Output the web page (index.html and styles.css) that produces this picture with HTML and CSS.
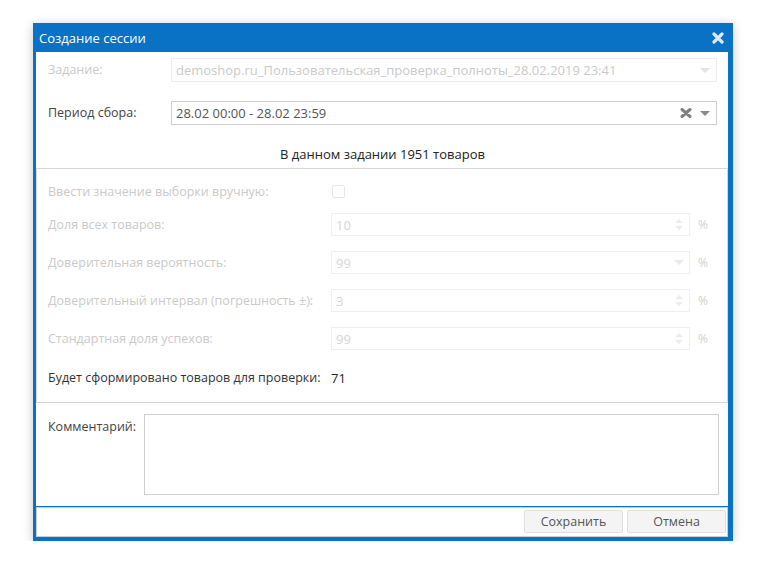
FILE: index.html
```html
<!DOCTYPE html>
<html lang="ru">
<head>
<meta charset="utf-8">
<title>Создание сессии</title>
<link rel="stylesheet" href="styles.css">
</head>
<body>
<div class="page">
  <div class="dialog">
    <div class="titlebar">
      <span class="title">Создание сессии</span>
      <svg class="close" width="12" height="12" viewBox="0 0 12 12"><path d="M2 2 L10 10 M10 2 L2 10" stroke="#dce9f6" stroke-width="3.2" stroke-linecap="round"/></svg>
    </div>
    <div class="content">
      <div class="top">
        <div class="frow">
          <span class="lbl lbl-top dis">Задание:</span>
          <div class="select select-dis">
            <span class="sel-text">demoshop.ru_Пользовательская_проверка_полноты_28.02.2019 23:41</span>
            <svg class="arrow" width="10" height="5" viewBox="0 0 10 5"><path d="M0 0 H10 L5 5 Z" fill="#e2e2e2"/></svg>
          </div>
        </div>
        <div class="frow">
          <span class="lbl lbl-top">Период сбора:</span>
          <div class="select">
            <span class="sel-text">28.02 00:00 - 28.02 23:59</span>
            <svg class="clear" width="12" height="10" viewBox="0 0 12 10"><path d="M2 1.5 L10 8.5 M10 1.5 L2 8.5" stroke="#808080" stroke-width="3" stroke-linecap="round"/></svg>
            <svg class="arrow" width="10" height="5" viewBox="0 0 10 5"><path d="M0 0 H10 L5 5 Z" fill="#8a8a8a"/></svg>
          </div>
        </div>
        <div class="info">В данном задании 1951 товаров</div>
      </div>

      <div class="params">
        <div class="prow prow-check">
          <span class="lbl lbl-mid dis">Ввести значение выборки вручную:</span>
          <span class="checkbox"></span>
        </div>
        <div class="prow">
          <span class="lbl lbl-mid dis">Доля всех товаров:</span>
          <div class="num">
            <span class="num-text">10</span>
            <svg class="spin" width="10" height="11" viewBox="0 0 10 11"><path d="M1 4 L5 0 L9 4 Z M1 7 L5 11 L9 7 Z" fill="#ebebeb"/></svg>
          </div>
          <span class="pct">%</span>
        </div>
        <div class="prow">
          <span class="lbl lbl-mid dis">Доверительная вероятность:</span>
          <div class="num">
            <span class="num-text">99</span>
            <svg class="spin" width="10" height="5" viewBox="0 0 10 5"><path d="M0 0 H10 L5 5 Z" fill="#ebebeb"/></svg>
          </div>
          <span class="pct">%</span>
        </div>
        <div class="prow">
          <span class="lbl lbl-mid dis">Доверительный интервал (погрешность ±):</span>
          <div class="num">
            <span class="num-text">3</span>
            <svg class="spin" width="10" height="11" viewBox="0 0 10 11"><path d="M1 4 L5 0 L9 4 Z M1 7 L5 11 L9 7 Z" fill="#ebebeb"/></svg>
          </div>
          <span class="pct">%</span>
        </div>
        <div class="prow">
          <span class="lbl lbl-mid dis">Стандартная доля успехов:</span>
          <div class="num">
            <span class="num-text">99</span>
            <svg class="spin" width="10" height="11" viewBox="0 0 10 11"><path d="M1 4 L5 0 L9 4 Z M1 7 L5 11 L9 7 Z" fill="#ebebeb"/></svg>
          </div>
          <span class="pct">%</span>
        </div>
        <div class="result">
          <span class="lbl lbl-mid">Будет сформировано товаров для проверки:</span>
          <span class="value">71</span>
        </div>
      </div>

      <div class="comment">
        <span class="lbl lbl-com">Комментарий:</span>
        <div class="textarea"></div>
      </div>
    </div>
    <div class="buttons">
      <button class="btn">Сохранить</button>
      <button class="btn">Отмена</button>
    </div>
  </div>
</div>
</body>
</html>
```
FILE: styles.css
```css
html, body {
  margin: 0;
  padding: 0;
  background: #ffffff;
}

body {
  font-family: "Open Sans", "Liberation Sans", sans-serif;
  font-size: 12.5px;
  color: #444444;
}

.page {
  padding: 23px 0 0 33px;
}

.dialog {
  width: 700px;
  height: 518px;
  box-sizing: border-box;
  background: #0a72c4;
  padding: 0 5px 4px 3px;
  display: flex;
  flex-direction: column;
  box-shadow: 0 2px 10px rgba(0, 0, 0, 0.22);
}

.titlebar {
  height: 29px;
  display: flex;
  align-items: center;
  justify-content: space-between;
  padding: 0 4px 0 3px;
  flex-shrink: 0;
}

.title {
  color: #ffffff;
  font-size: 13px;
  line-height: 18px;
  padding-top: 1px;
}

.close {
  display: block;
  margin-top: 1px;
}

.content {
  background: #ffffff;
  display: flex;
  flex-direction: column;
  height: 454px;
  flex-shrink: 0;
}

.top {
  height: 116px;
  box-sizing: border-box;
  padding: 6px 11px 0 12px;
  display: flex;
  flex-direction: column;
}

.frow {
  display: flex;
  align-items: center;
  height: 24px;
  margin-bottom: 19px;
}

.lbl {
  line-height: 18px;
  white-space: nowrap;
  flex-shrink: 0;
}

.lbl-top {
  width: 123px;
}

.dis {
  color: #cacaca;
}

.select {
  flex: 1;
  height: 24px;
  box-sizing: border-box;
  border: 1px solid #cfcfcf;
  display: flex;
  align-items: center;
  padding: 0 6px 0 4px;
}

.select-dis {
  border-color: #ececec;
}

.sel-text {
  flex: 1;
  white-space: nowrap;
  overflow: hidden;
  color: #555555;
  font-size: 13px;
}

.select-dis .sel-text {
  color: #cacaca;
}

.clear {
  display: block;
  margin-right: 8px;
}

.arrow {
  display: block;
}

.info {
  text-align: center;
  color: #222222;
  font-size: 13px;
  line-height: 18px;
  margin-top: 1px;
}

.params {
  border: 1px solid #d6d6d6;
  height: 235px;
  box-sizing: border-box;
  padding: 16px 0 0 11px;
  display: flex;
  flex-direction: column;
  gap: 15px;
}

.prow {
  display: flex;
  align-items: center;
  height: 23px;
}

.prow-check {
  height: 13px;
}

.lbl-mid {
  width: 283px;
}

.checkbox {
  display: block;
  width: 11px;
  height: 11px;
  border: 1px solid #e6e6e6;
  border-radius: 2px;
  margin-left: 1px;
}

.num {
  width: 359px;
  height: 23px;
  box-sizing: border-box;
  border: 1px solid #efefef;
  display: flex;
  align-items: center;
  padding: 0 5px 0 4px;
}

.num-text {
  flex: 1;
  color: #d6d6d6;
  font-size: 13px;
}

.spin {
  display: block;
}

.pct {
  color: #d0d0d0;
  font-size: 12px;
  margin-left: 8px;
}

.result {
  display: flex;
  align-items: center;
  margin-top: 4px;
  height: 18px;
  color: #333333;
}

.value {
  color: #222222;
  font-size: 13px;
}

.comment {
  display: flex;
  align-items: flex-start;
  padding: 11px 9px 0 12px;
  height: 103px;
  box-sizing: border-box;
}

.lbl-com {
  width: 96px;
  padding-top: 4px;
}

.textarea {
  flex: 1;
  height: 81px;
  box-sizing: border-box;
  border: 1px solid #d0d0d0;
}

.buttons {
  margin-top: 1px;
  background: #ffffff;
  border: 1px solid #cccccc;
  height: 30px;
  box-sizing: border-box;
  display: flex;
  justify-content: flex-end;
  align-items: flex-start;
  padding: 2px 1px 0 0;
  gap: 4px;
}

.btn {
  width: 99px;
  height: 23px;
  box-sizing: border-box;
  border: 1px solid #e0e0e0;
  border-radius: 2px;
  background: #f4f4f4;
  color: #555555;
  font-family: "Open Sans", "Liberation Sans", sans-serif;
  font-size: 12.5px;
  padding: 0;
}
```
